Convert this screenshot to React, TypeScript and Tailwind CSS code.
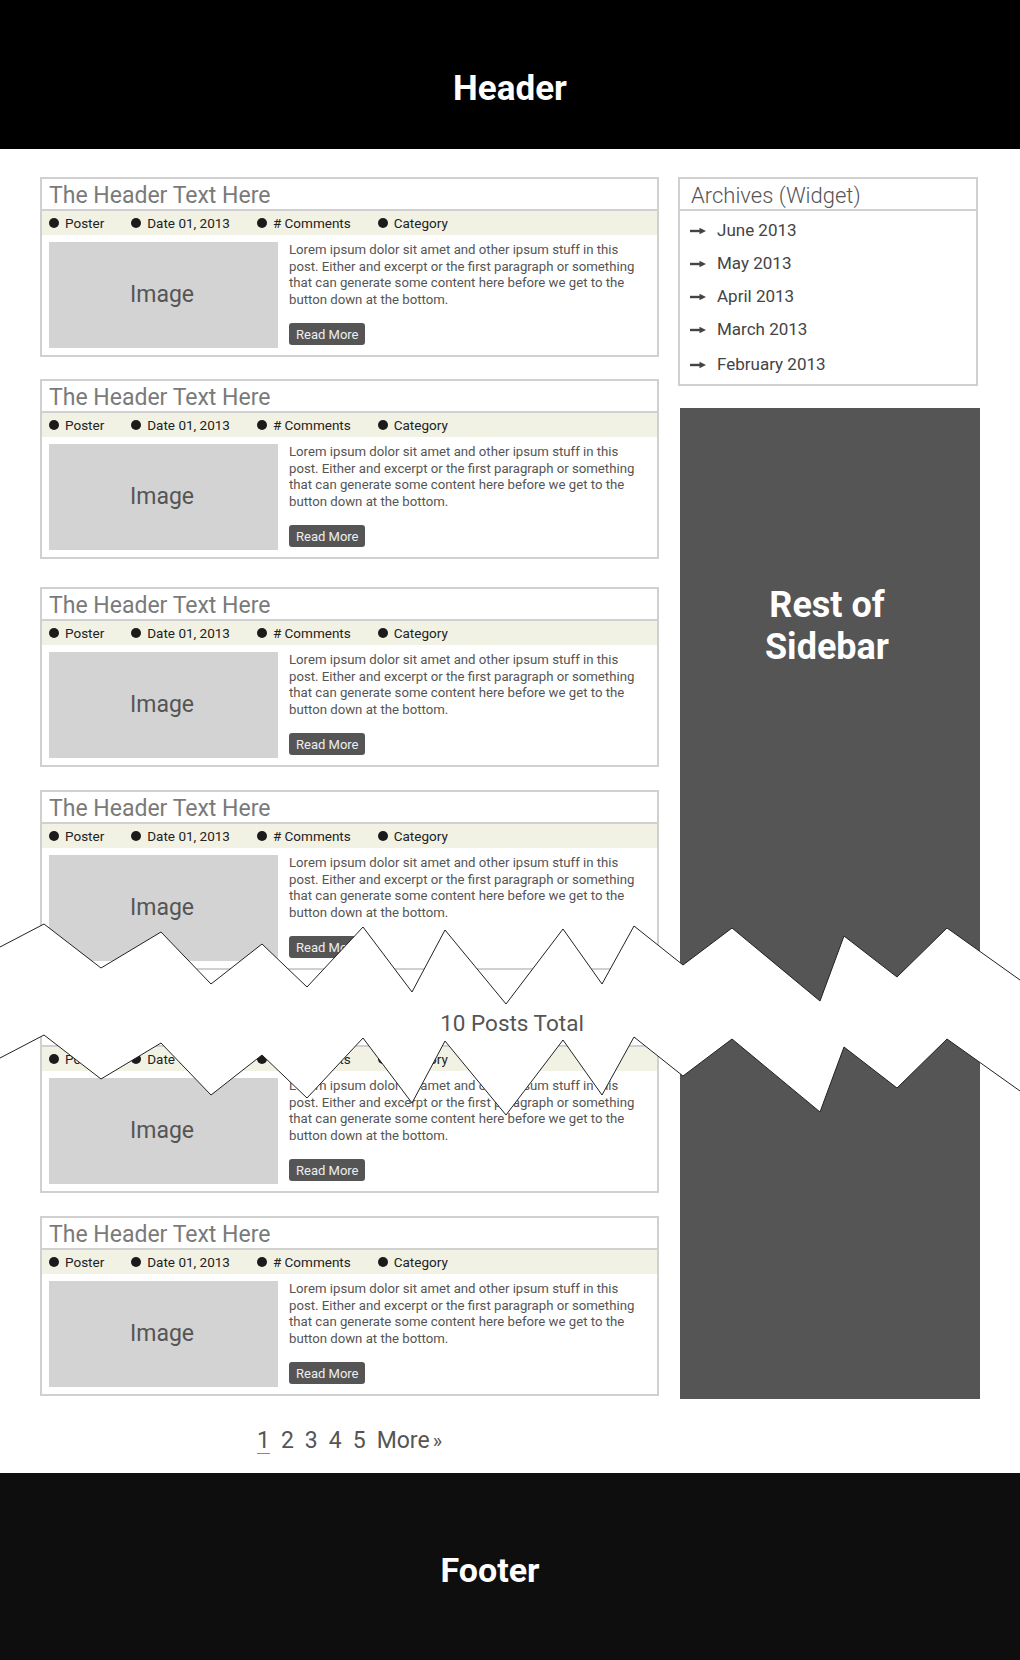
import React from 'react';

const meta = ['Poster', 'Date 01, 2013', '# Comments', 'Category'];

const excerpt = [
    'Lorem ipsum dolor sit amet and other ipsum stuff in this',
    'post. Either and excerpt or the first paragraph or something',
    'that can generate some content here before we get to the',
    'button down at the bottom.',
];

// spacing above each post card (the mockup is not perfectly regular)
const cardGaps = ['', 'mt-[22px]', 'mt-[28px]', 'mt-[23px]', 'mt-[43px]', 'mt-[23px]'];

const archives = ['June 2013', 'May 2013', 'April 2013', 'March 2013', 'February 2013'];

// top edge of the "cut" band, in px relative to the overlay top (y = 900)
const zig: [number, number][] = [
    [0, 47], [44, 24], [101, 68], [161, 32], [211, 84], [262, 44], [307, 87],
    [363, 27], [412, 92], [445, 30], [506, 104], [563, 29], [602, 84], [634, 26],
    [683, 65], [732, 28], [820, 101], [844, 36], [897, 77], [947, 28], [1020, 80],
];
const drop = 111;

const toPts = (pts: [number, number][], dy = 0) => pts.map(([x, y]) => `${x},${y + dy}`).join(' ');

function Arrow() {
    return (
        <svg width="16" height="8" viewBox="0 0 16 8" className="shrink-0">
            <path d="M0 4 H11" stroke="#444" strokeWidth="2.4" />
            <polygon points="9.5,0.8 16,4 9.5,7.2" fill="#444" />
        </svg>
    );
}

function PostCard({ className }: { className: string }) {
    return (
        <div className={`border-2 border-[#d0d0d0] bg-white ${className}`}>
            {/* Title */}
            <div className="h-[32px] border-b-2 border-[#d0d0d0] pl-[7px] flex items-center">
                <h2 className="text-[23px] leading-none text-[#7a7a7a] pt-[3px]">The Header Text Here</h2>
            </div>

            {/* Meta */}
            <div className="h-[24px] bg-[#f1f1e4] pl-[7px] flex items-center gap-[27px]">
                {meta.map((m) => (
                    <span key={m} className="flex items-center text-[13.5px] text-[#222]">
                        <span className="w-[10px] h-[10px] rounded-full bg-[#1b1b1b] mr-[6px]" />
                        {m}
                    </span>
                ))}
            </div>

            {/* Body */}
            <div className="flex pl-[7px] pt-[7px] pb-[7px]">
                <div className="w-[229px] h-[106px] bg-[#d3d3d3] flex items-center justify-center">
                    <span className="text-[23px] text-[#555] pr-[3px]">Image</span>
                </div>
                <div className="ml-[11px] flex flex-col items-start">
                    <p className="text-[13.2px] leading-[16.5px] text-[#555] whitespace-nowrap">
                        {excerpt.map((line, i) => (
                            <React.Fragment key={i}>
                                {line}
                                {i < excerpt.length - 1 && <br />}
                            </React.Fragment>
                        ))}
                    </p>
                    <button className="mt-[15px] h-[22px] px-[7px] rounded-[3px] bg-[#555] text-[13px] text-[#eee] leading-none">
                        Read More
                    </button>
                </div>
            </div>
        </div>
    );
}

export default function App() {
    return (
        <div className="relative w-[1020px] min-h-[1660px] bg-white font-['Roboto',sans-serif]">
            {/* Header */}
            <header className="h-[149px] bg-black flex items-center justify-center pt-[27px]">
                <h1 className="text-[35px] font-bold text-white leading-none">Header</h1>
            </header>

            <div className="flex pl-[40px] pt-[28px]">
                {/* Main column */}
                <main className="w-[619px]">
                    {cardGaps.map((g, i) => (
                        <PostCard key={i} className={g} />
                    ))}

                    {/* Pagination */}
                    <div className="h-[77px] flex justify-center items-start pt-[33px]">
                        <div className="flex items-baseline gap-[11px] text-[23px] leading-none text-[#555]">
                            <span className="underline underline-offset-[5px] decoration-1 decoration-[#888]">1</span>
                            <span>2</span>
                            <span>3</span>
                            <span>4</span>
                            <span>5</span>
                            <span>More<span className="ml-[3px] text-[20px]">»</span></span>
                        </div>
                    </div>
                </main>

                {/* Sidebar */}
                <aside className="ml-[19px] w-[302px]">
                    <div className="w-[300px] border-2 border-[#d0d0d0]">
                        <div className="h-[32px] border-b-2 border-[#d0d0d0] pl-[11px] flex items-center">
                            <h3 className="text-[22px] font-light leading-none text-[#555] pt-[3px]">Archives (Widget)</h3>
                        </div>
                        <ul className="pl-[10px] pt-[3px] pb-[3px]">
                            {archives.map((a, i) => (
                                <li
                                    key={a}
                                    className={`flex items-center gap-[11px] text-[17px] text-[#444] ${i === archives.length - 1 ? 'h-[35px] pt-[2px]' : 'h-[33px]'}`}
                                >
                                    <Arrow />
                                    {a}
                                </li>
                            ))}
                        </ul>
                    </div>

                    <div className="mt-[22px] ml-[2px] w-[300px] h-[991px] bg-[#555] pt-[176px] pr-[6px]">
                        <p className="text-center text-[36px] font-bold leading-[42px] text-white">
                            Rest of
                            <br />
                            Sidebar
                        </p>
                    </div>
                </aside>
            </div>

            {/* Footer */}
            <footer className="h-[187px] bg-[#0e0e0e] flex items-center justify-center pt-[7px] pr-[40px]">
                <h2 className="text-[34px] font-bold text-white leading-none">Footer</h2>
            </footer>

            {/* Torn "skipped posts" band laid over the list */}
            <div className="absolute left-0 top-[900px] w-[1020px] h-[230px]">
                <svg width="1020" height="230" viewBox="0 0 1020 230" className="absolute inset-0">
                    <polygon
                        points={`${toPts(zig)} ${toPts([...zig].reverse(), drop)}`}
                        fill="#fff"
                    />
                    <polyline points={toPts(zig)} fill="none" stroke="#222" strokeWidth="1" />
                    <polyline points={toPts(zig, drop)} fill="none" stroke="#222" strokeWidth="1" />
                </svg>
                <p className="absolute left-0 right-0 top-[112px] text-center pl-[4px] text-[22.5px] leading-none text-[#555]">
                    10 Posts Total
                </p>
            </div>
        </div>
    );
}
